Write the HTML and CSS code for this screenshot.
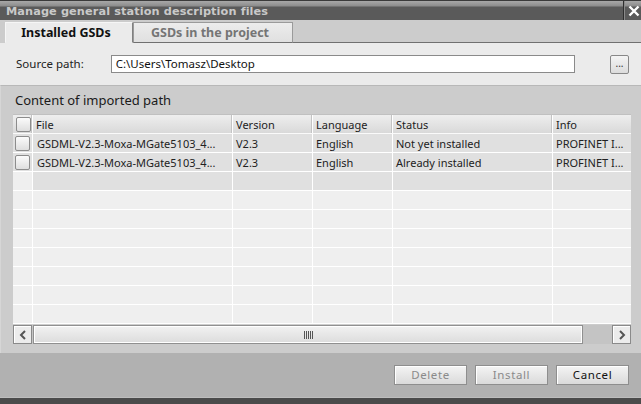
FILE: index.html
```html
<!DOCTYPE html>
<html>
<head>
<meta charset="utf-8">
<link rel="stylesheet" href="styles.css">
</head>
<body>
<div class="window">
  <div class="titlebar">
    <span class="title">Manage general station description files</span>
    <div class="close">
      <svg width="12" height="12" viewBox="0 0 12 12"><path d="M1.5 1.5 L10.5 10.5 M10.5 1.5 L1.5 10.5" stroke="#fff" stroke-width="2.4" fill="none"/></svg>
    </div>
  </div>
  <div class="tabs">
    <div class="tab active">Installed GSDs</div>
    <div class="tab">GSDs in the project</div>
    <div class="tab-rest"></div>
  </div>
  <div class="source">
    <span class="label">Source path:</span>
    <div class="input">C:\Users\Tomasz\Desktop</div>
    <div class="browse">...</div>
  </div>
  <div class="panel">
    <div class="panel-title">Content of imported path</div>
    <div class="grid">
      <div class="row head">
        <div class="cell chk"><span class="box"></span></div>
        <div class="cell c-file">File</div>
        <div class="cell c-ver">Version</div>
        <div class="cell c-lang">Language</div>
        <div class="cell c-status">Status</div>
        <div class="cell c-info">Info</div>
      </div>
      <div class="row data">
        <div class="cell chk"><span class="box"></span></div>
        <div class="cell c-file">GSDML-V2.3-Moxa-MGate5103_4...</div>
        <div class="cell c-ver">V2.3</div>
        <div class="cell c-lang">English</div>
        <div class="cell c-status">Not yet installed</div>
        <div class="cell c-info">PROFINET I...</div>
      </div>
      <div class="row data">
        <div class="cell chk"><span class="box"></span></div>
        <div class="cell c-file">GSDML-V2.3-Moxa-MGate5103_4...</div>
        <div class="cell c-ver">V2.3</div>
        <div class="cell c-lang">English</div>
        <div class="cell c-status">Already installed</div>
        <div class="cell c-info">PROFINET I...</div>
      </div>
      <div class="row newrow">
        <div class="cell chk"></div><div class="cell c-file"></div><div class="cell c-ver"></div><div class="cell c-lang"></div><div class="cell c-status"></div><div class="cell c-info"></div>
      </div>
      <div class="row empty"><div class="cell chk"></div><div class="cell c-file"></div><div class="cell c-ver"></div><div class="cell c-lang"></div><div class="cell c-status"></div><div class="cell c-info"></div></div>
      <div class="row empty"><div class="cell chk"></div><div class="cell c-file"></div><div class="cell c-ver"></div><div class="cell c-lang"></div><div class="cell c-status"></div><div class="cell c-info"></div></div>
      <div class="row empty"><div class="cell chk"></div><div class="cell c-file"></div><div class="cell c-ver"></div><div class="cell c-lang"></div><div class="cell c-status"></div><div class="cell c-info"></div></div>
      <div class="row empty"><div class="cell chk"></div><div class="cell c-file"></div><div class="cell c-ver"></div><div class="cell c-lang"></div><div class="cell c-status"></div><div class="cell c-info"></div></div>
      <div class="row empty"><div class="cell chk"></div><div class="cell c-file"></div><div class="cell c-ver"></div><div class="cell c-lang"></div><div class="cell c-status"></div><div class="cell c-info"></div></div>
      <div class="row empty"><div class="cell chk"></div><div class="cell c-file"></div><div class="cell c-ver"></div><div class="cell c-lang"></div><div class="cell c-status"></div><div class="cell c-info"></div></div>
      <div class="row empty"><div class="cell chk"></div><div class="cell c-file"></div><div class="cell c-ver"></div><div class="cell c-lang"></div><div class="cell c-status"></div><div class="cell c-info"></div></div>
    </div>
    <div class="hscroll">
      <div class="sbtn">
        <svg width="8" height="10" viewBox="0 0 8 10"><path d="M6 1 L2 5 L6 9" stroke="#555" stroke-width="2" fill="none"/></svg>
      </div>
      <div class="track"><span class="grip"></span></div>
      <div class="sgap"></div>
      <div class="sbtn">
        <svg width="8" height="10" viewBox="0 0 8 10"><path d="M2 1 L6 5 L2 9" stroke="#555" stroke-width="2" fill="none"/></svg>
      </div>
    </div>
  </div>
  <div class="footer">
    <div class="btn disabled">Delete</div>
    <div class="btn disabled">Install</div>
    <div class="btn">Cancel</div>
  </div>
  <div class="bottombar"></div>
</div>
</body>
</html>
```

FILE: styles.css
```css
* { box-sizing: border-box; }
html, body { margin: 0; padding: 0; }
body {
  width: 641px;
  height: 404px;
  overflow: hidden;
  font-family: "Noto Sans", "Open Sans", sans-serif;
  font-size: 11px;
  color: #222;
  background: #b1b1b1;
}
.window { display: flex; flex-direction: column; width: 641px; height: 404px; }

.titlebar {
  height: 20px;
  flex: none;
  display: flex;
  align-items: center;
  justify-content: space-between;
  border-top: 1px solid #3a3a3a;
  background: linear-gradient(#a8a8a8 0px, #8c8c8c 5px, #5a5a5a 6px, #5a5a5a 100%);
  padding-left: 6px;
}
.title {
  font-family: "DejaVu Sans", sans-serif;
  font-weight: bold;
  font-size: 11.3px;
  color: #c9c9c9;
  letter-spacing: 0.1px;
  padding-top: 2px;
}
.close {
  width: 18px;
  height: 19px;
  border-left: 1px solid #2e2e2e;
  box-shadow: inset 1px 0 0 #8a8a8a;
  display: flex;
  align-items: center;
  justify-content: center;
  padding-left: 2px;
  padding-top: 1px;
}

.tabs {
  height: 23px;
  flex: none;
  background: #cccccc;
  display: flex;
  align-items: flex-end;
  padding-left: 5px;
}
.tab {
  height: 21px;
  display: flex;
  align-items: center;
  font-weight: bold;
  font-size: 12.5px;
  color: #757575;
  background: linear-gradient(#ececec, #e0e0e0);
  border: 1px solid #9a9a9a;
  border-bottom: 1px solid #707070;
  padding: 0 16px 0 10px;
  width: 160px;
  justify-content: center;
}
.tab.active {
  width: 128px;
  color: #111;
  background: #ebebeb;
  border-color: #f6f6f6 #808080 #ebebeb #f6f6f6;
  height: 21px;
}
.tab-rest { flex: 1; border-bottom: 1px solid #707070; }

.source {
  height: 42px;
  flex: none;
  background: #ebebeb;
  display: flex;
  align-items: center;
  padding: 0 12px 0 16px;
}
.label { width: 95px; font-size: 11.5px; color: #222; padding-bottom: 2px; }
.input {
  width: 466px;
  height: 18px;
  background: #fff;
  border: 1px solid #8a8a8a;
  padding-left: 4px;
  font-size: 11.5px;
  line-height: 16px;
  color: #111;
}
.browse {
  margin-left: 35px;
  width: 19px;
  height: 19px;
  border: 1px solid #888;
  border-radius: 2px;
  background: linear-gradient(#f4f4f4, #dcdcdc);
  font-size: 10px;
  line-height: 14px;
  text-align: center;
  color: #333;
}

.panel {
  width: 641px;
  height: 268px;
  flex: none;
  background: #cccccc;
  border-top: 1px solid #b8b8b8;
  border-left: 1px solid #d6d6d6;
  padding: 0 10px 0 12px;
  display: flex;
  flex-direction: column;
  align-items: flex-start;
}
.panel-title {
  height: 28px;
  font-size: 13px;
  line-height: 28px;
  color: #1a1a1a;
  padding-left: 2px;
}
.grid { display: flex; flex-direction: column; width: 618px; }
.row { display: flex; width: 618px; height: 19px; border-bottom: 1px solid #fff; }
.row.head {
  height: 20px;
  background: linear-gradient(#eeeeee, #d9d9d9);
  border-top: 1px solid #c0c0c0;
  border-bottom: 1px solid #fafafa;
}
.cell {
  height: 100%;
  border-right: 1px solid #fff;
  display: flex;
  align-items: center;
  padding-left: 3px;
  white-space: nowrap;
  overflow: hidden;
  font-size: 11px;
}
.head .cell { border-right: 1px solid #ffffff; box-shadow: inset -1px 0 0 #c4c4c4; padding-left: 3px; }
.chk { width: 20px; flex: none; padding-left: 2px; }
.c-file { width: 200px; flex: none; padding-left: 4px; }
.c-ver { width: 80px; flex: none; }
.c-lang { width: 80px; flex: none; }
.c-status { width: 160px; flex: none; }
.c-info { width: 78px; flex: none; border-right: none; }
.head .c-info { box-shadow: none; border-right: none; }
.data { background: #e0e0e0; }
.newrow { background: #e0e0e0; }
.newrow .chk, .empty { background: #efefef; }
.box {
  width: 15px;
  height: 15px;
  border: 1px solid #8c8c8c;
  border-radius: 2px;
  background: linear-gradient(#fbfbfb, #dedede);
  display: block;
}

.hscroll {
  margin-top: 1px;
  width: 618px;
  height: 19px;
  display: flex;
  background: #c4c4c4;
}
.sbtn {
  width: 19px;
  height: 19px;
  flex: none;
  border: 1px solid #8a8a8a;
  box-shadow: inset 1px 1px 0 #fff;
  background: #ececec;
  display: flex;
  align-items: center;
  justify-content: center;
}
.track {
  margin-left: 1px;
  width: 550px;
  flex: none;
  height: 19px;
  border: 1px solid #909090;
  box-shadow: inset 1px 1px 0 #fff, inset -1px -1px 0 #fff;
  background: linear-gradient(#f2f2f2, #dcdcdc);
  position: relative;
}
.grip {
  position: absolute;
  left: 270px;
  top: 5px;
  width: 9px;
  height: 8px;
  background: repeating-linear-gradient(90deg, #555 0 1px, transparent 1px 2px);
}
.sgap { flex: 1; }

.footer {
  height: 44px;
  flex: none;
  background: #b1b1b1;
  display: flex;
  align-items: center;
  justify-content: flex-end;
  gap: 8px;
  padding-right: 12px;
  padding-bottom: 1px;
}
.btn {
  width: 73px;
  height: 20px;
  border: 1px solid #8e8e8e;
  background: linear-gradient(#f4f4f4, #dadada);
  box-shadow: inset 1px 1px 0 #fff;
  text-align: center;
  font-size: 11.5px;
  line-height: 18px;
  letter-spacing: 0.6px;
  color: #111;
}
.btn.disabled { color: #8a8a8a; }
.bottombar {
  flex: 1;
  background: #4b4b4b;
  border-top: 1px solid #bdbdbd;
}
```
